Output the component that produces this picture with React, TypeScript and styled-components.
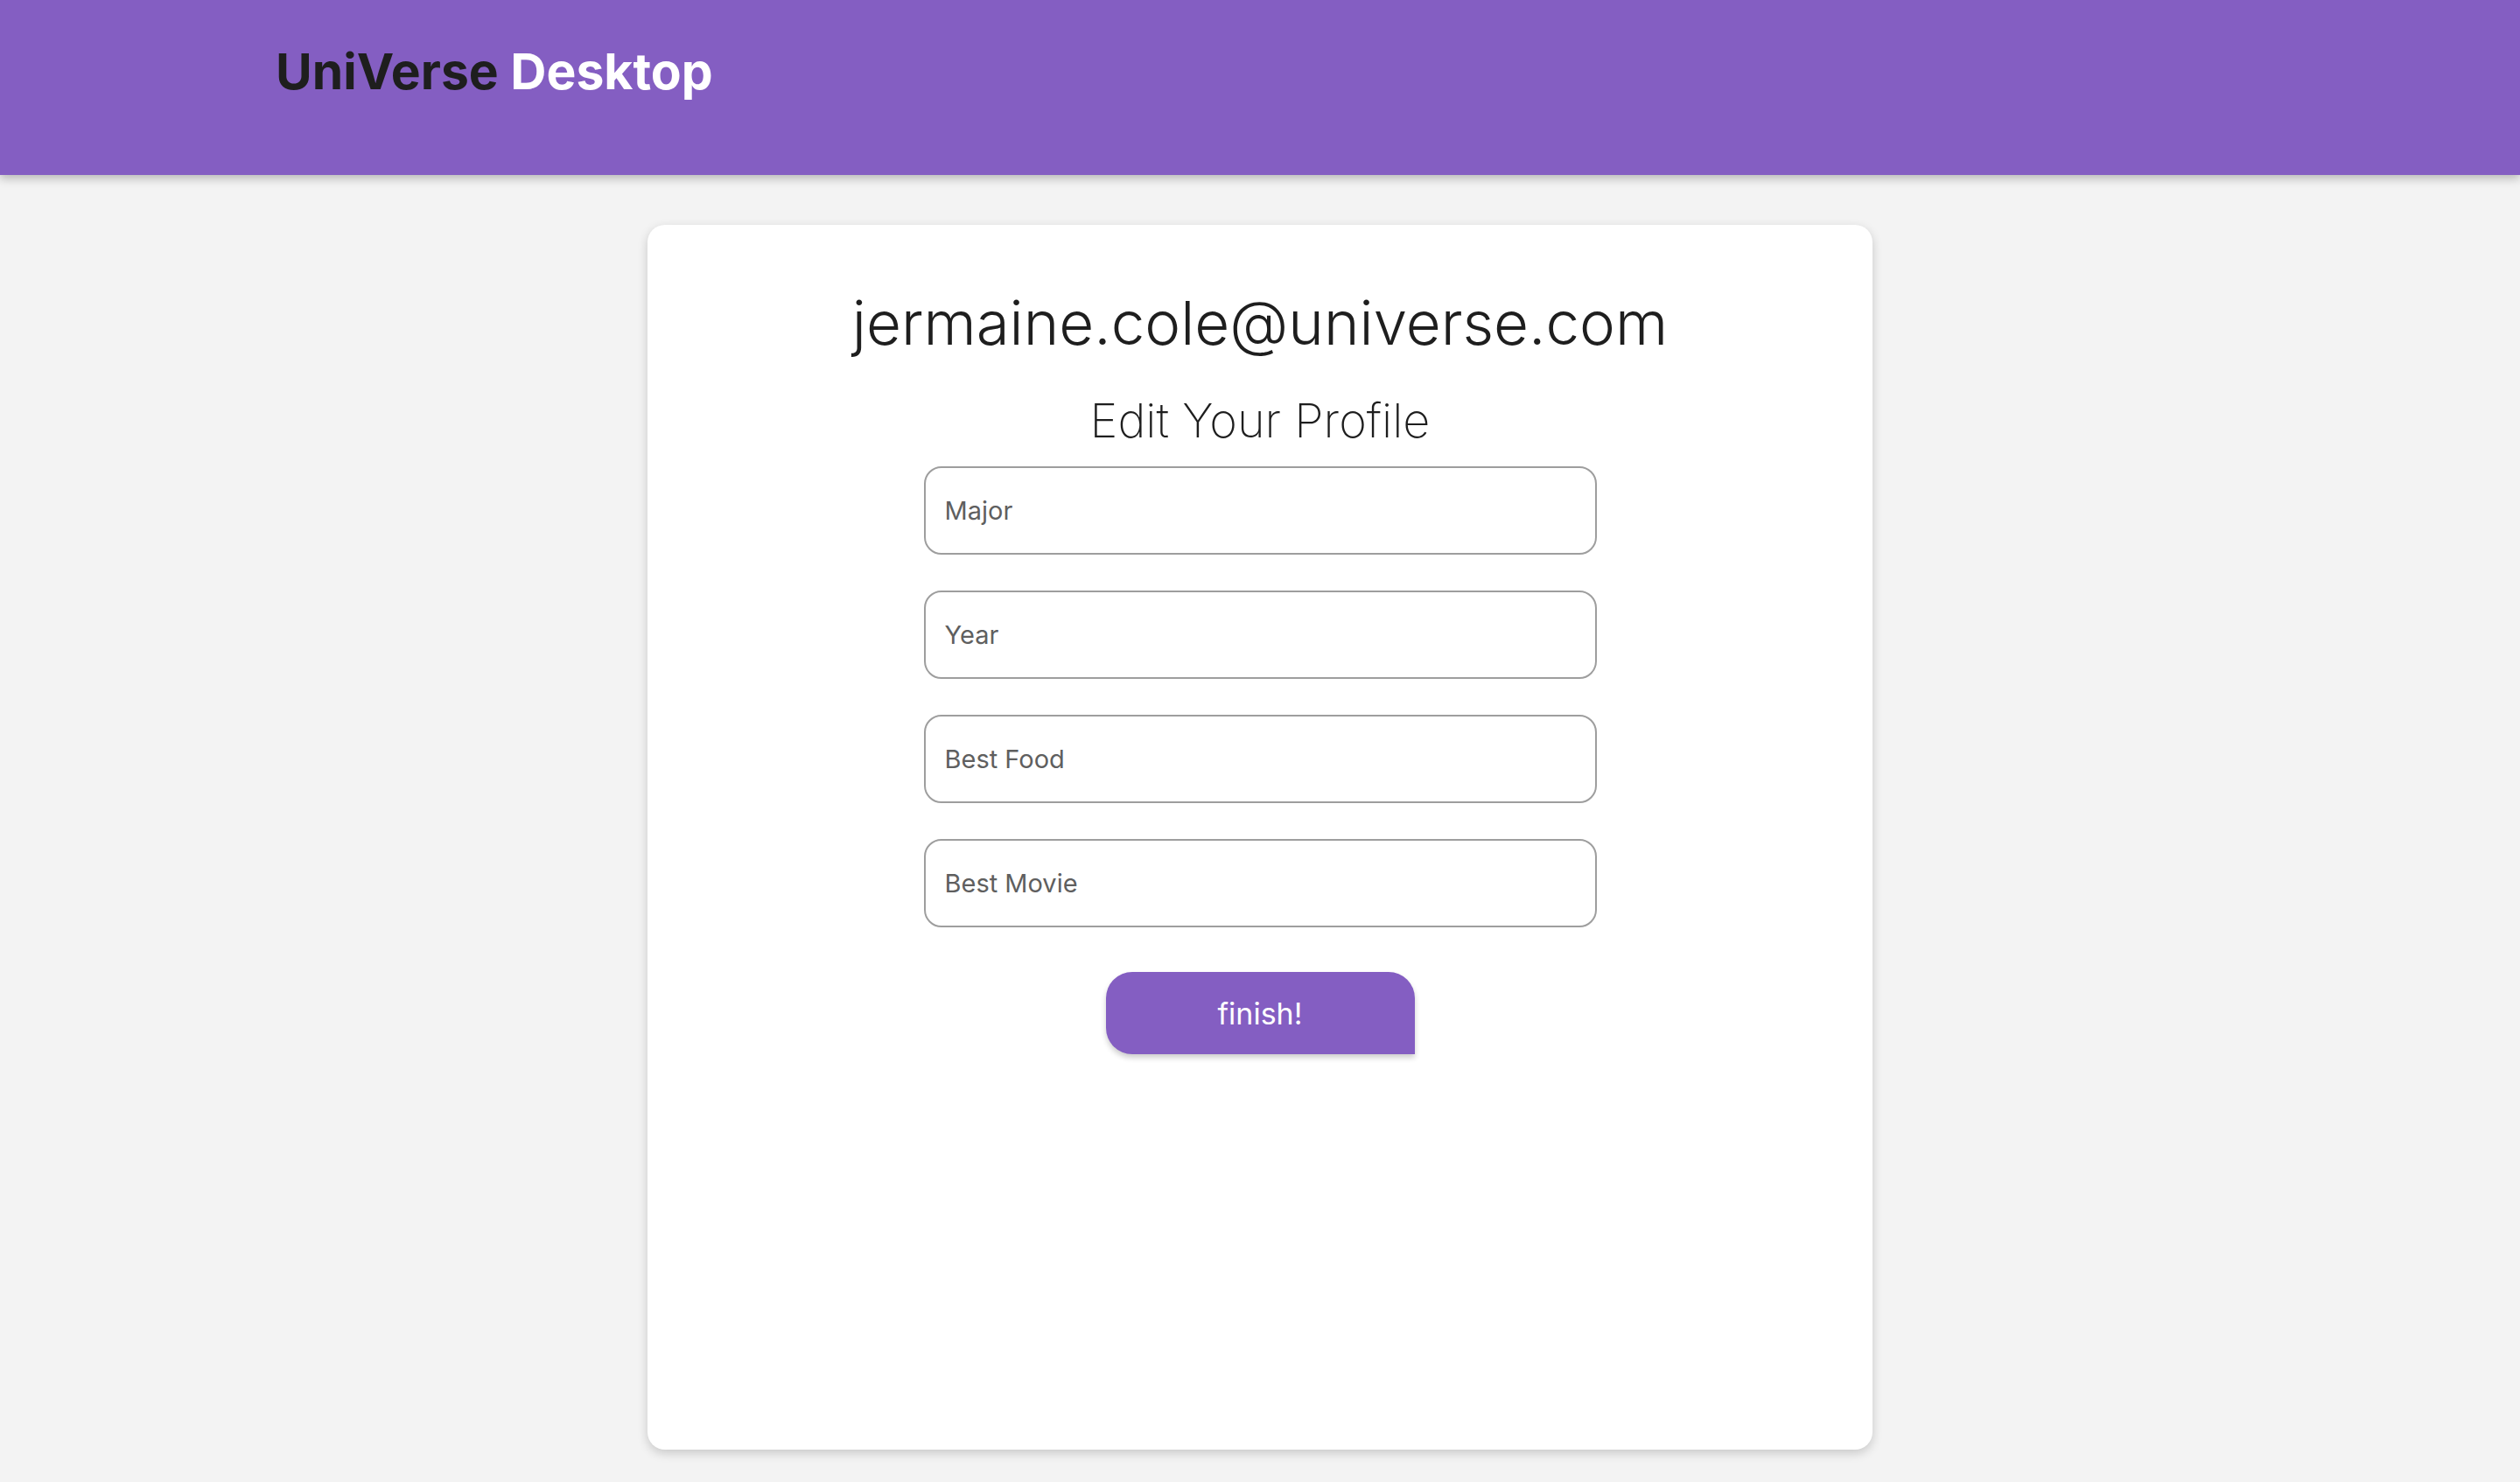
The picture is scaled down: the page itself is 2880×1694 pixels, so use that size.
import React from "react";
import styled, { createGlobalStyle } from "styled-components";

const GlobalStyle = createGlobalStyle`
  html, body {
    margin: 0;
    padding: 0;
    background: #f3f3f3;
    font-family: Inter, "Noto Sans", Roboto, sans-serif;
  }
  * { box-sizing: border-box; }
`;

const Page = styled.div`
  min-height: 1694px;
  background: #f3f3f3;
  display: flex;
  flex-direction: column;
`;

const Header = styled.header`
  height: 200px;
  background: #845ec2;
  box-shadow: 0 4px 10px rgba(0, 0, 0, 0.25);
  display: flex;
  align-items: flex-start;
  padding: 48px 0 0 315px;
  position: relative;
  z-index: 1;
`;

const Brand = styled.h1`
  margin: 0;
  font-family: Inter, sans-serif;
  font-weight: 700;
  font-size: 57px;
  line-height: 1.2;
  color: #1e1e1e;
`;

const BrandAccent = styled.span`
  color: #ffffff;
`;

const Main = styled.main`
  display: flex;
  justify-content: center;
  padding-top: 57px;
`;

const Card = styled.section`
  width: 1400px;
  height: 1400px;
  background: #ffffff;
  border-radius: 20px;
  box-shadow: 0 4px 12px rgba(0, 0, 0, 0.18);
  display: flex;
  flex-direction: column;
  align-items: center;
  padding-top: 71px;
`;

const Email = styled.h2`
  margin: 0;
  font-weight: 300;
  font-size: 69px;
  line-height: 83px;
  color: #1e1e1e;
`;

const Subtitle = styled.h3`
  margin: 37px 0 0;
  font-weight: 200;
  font-size: 54px;
  line-height: 66px;
  color: #1e1e1e;
`;

const Form = styled.form`
  display: flex;
  flex-direction: column;
  align-items: center;
  gap: 41px;
  margin-top: 19px;
`;

const Field = styled.input`
  width: 769px;
  height: 101px;
  border: 2px solid #9e9e9e;
  border-radius: 20px;
  padding: 0 22px;
  font-family: Inter, sans-serif;
  font-size: 29px;
  color: #333;
  background: #fff;
  outline: none;
  &::placeholder {
    color: #5f5f5f;
  }
`;

const Submit = styled.button`
  margin-top: 10px;
  width: 353px;
  height: 94px;
  border: none;
  border-radius: 30px 30px 0 30px;
  background: #845ec2;
  color: #ffffff;
  font-family: Inter, sans-serif;
  font-size: 34px;
  font-weight: 400;
  box-shadow: 0 4px 6px rgba(0, 0, 0, 0.2);
  cursor: pointer;
`;

const fields = ["Major", "Year", "Best Food", "Best Movie"];

export default function App() {
  return (
    <>
      <GlobalStyle />
      <Page>
        <Header>
          <Brand>
            UniVerse <BrandAccent>Desktop</BrandAccent>
          </Brand>
        </Header>
        <Main>
          <Card>
            <Email>jermaine.cole@universe.com</Email>
            <Subtitle>Edit Your Profile</Subtitle>
            <Form onSubmit={(e) => e.preventDefault()}>
              {fields.map((f) => (
                <Field key={f} placeholder={f} />
              ))}
              <Submit type="submit">finish!</Submit>
            </Form>
          </Card>
        </Main>
      </Page>
    </>
  );
}
